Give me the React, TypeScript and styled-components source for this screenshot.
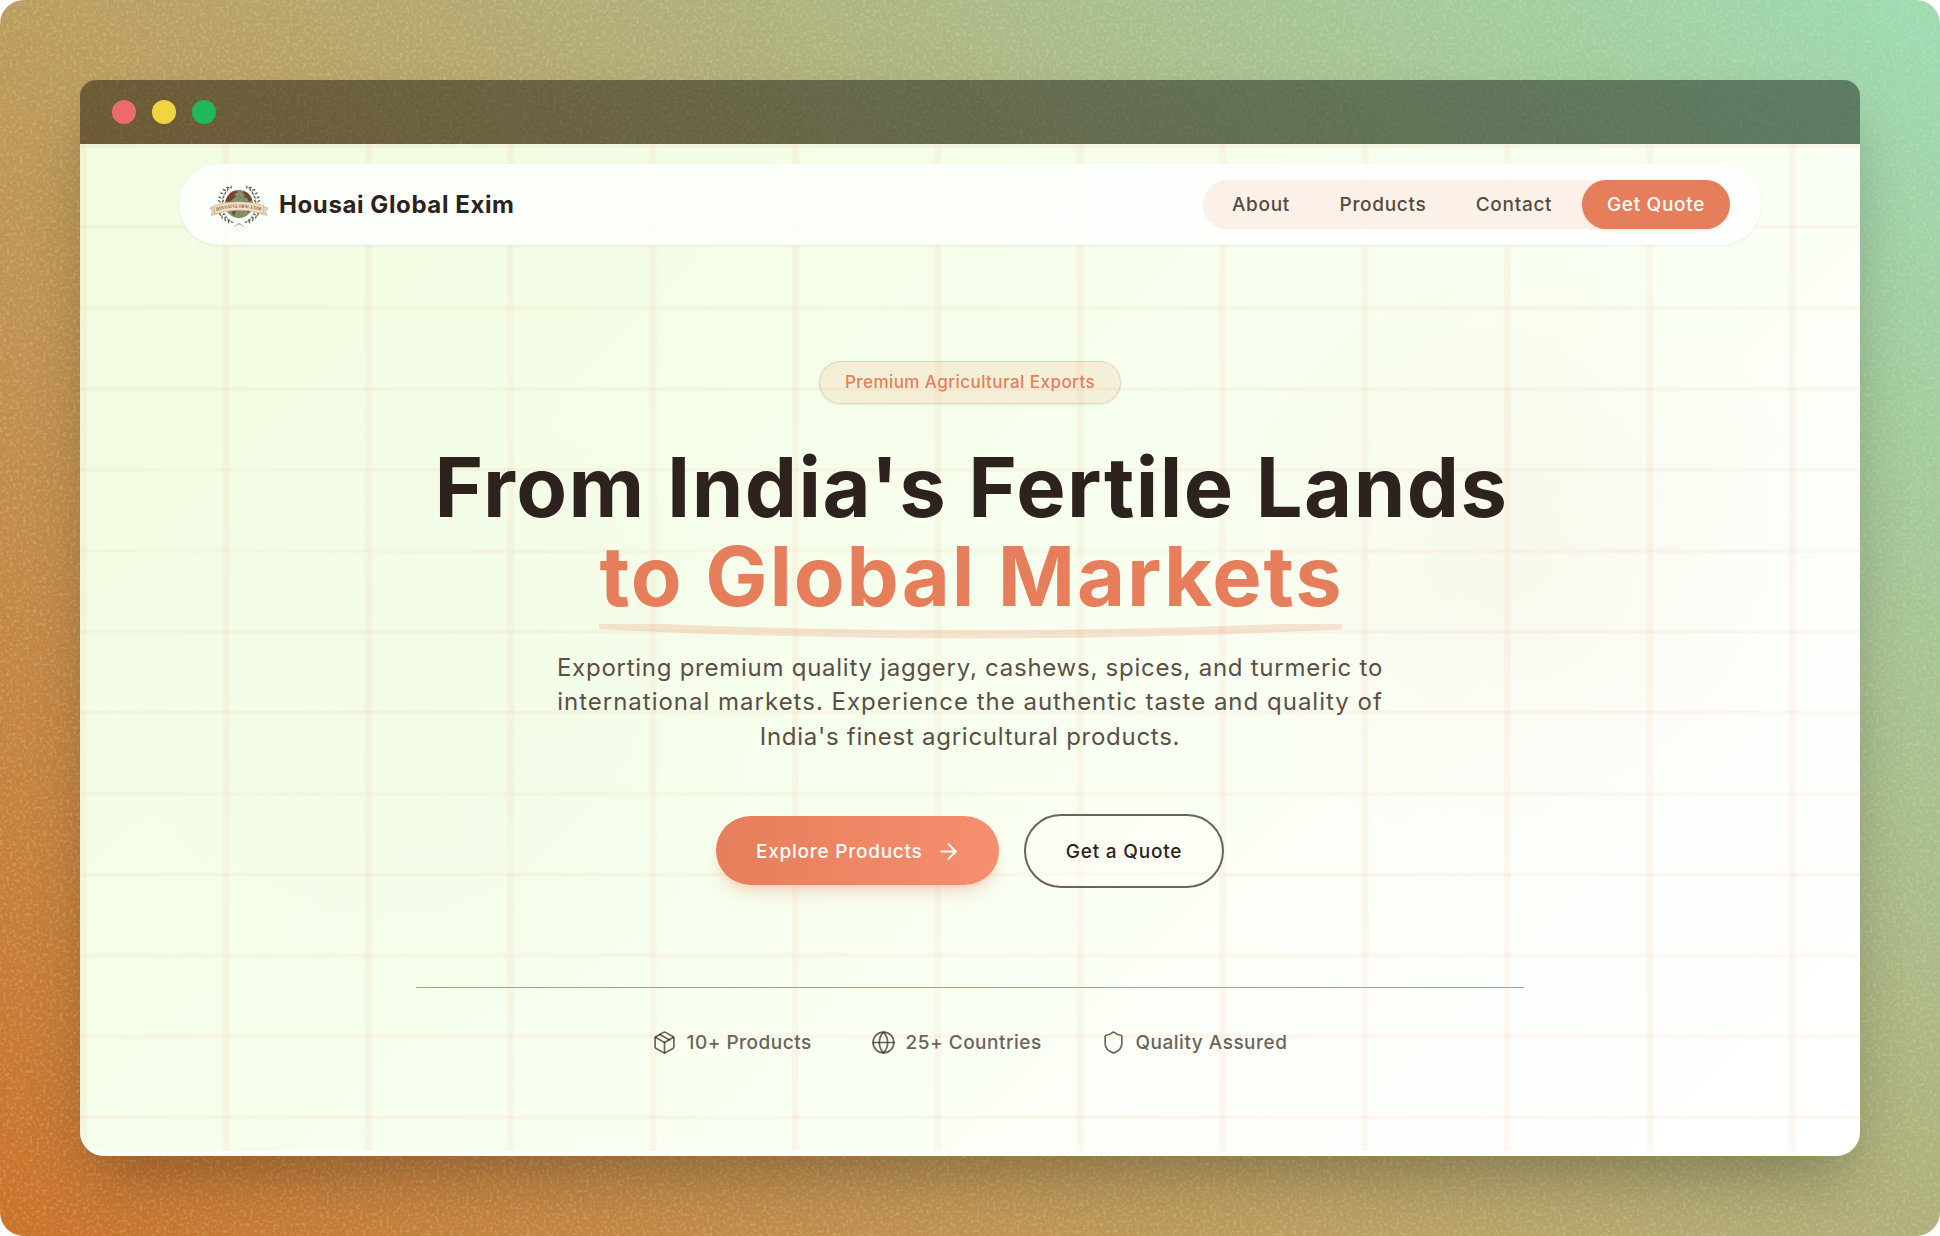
import React from "react";
import styled, { createGlobalStyle } from "styled-components";

const GlobalStyle = createGlobalStyle`
  *, *::before, *::after { box-sizing: border-box; }
  body { margin: 0; background: #fff; font-family: Inter, "Liberation Sans", sans-serif; }
`;

const ink = "#2d221d";
const accent = "#e67e5b";

const Backdrop = styled.div`
  position: relative;
  width: 1940px;
  height: 1236px;
  padding: 80px;
  border-radius: 24px;
  overflow: hidden;
  background: linear-gradient(45deg, #cb722c 0%, #bc9c5f 39%, #b0b07c 61%, #9ddcb4 100%);
`;

const Grain = styled.svg`
  position: absolute;
  inset: 0;
  width: 100%;
  height: 100%;
`;

const Window = styled.div`
  position: relative;
  height: 1076px;
  display: flex;
  flex-direction: column;
  border-radius: 16px 16px 24px 24px;
  box-shadow: 0 31px 62px -15px rgba(0, 0, 0, 0.3);
`;

const TitleBar = styled.div`
  height: 64px;
  display: flex;
  align-items: center;
  gap: 16px;
  padding-left: 32px;
  border-radius: 16px 16px 0 0;
  background: rgba(0, 0, 0, 0.42);
`;

const Dot = styled.span<{ $color: string }>`
  width: 24px;
  height: 24px;
  border-radius: 50%;
  opacity: 0.95;
  background: ${(p) => p.$color};
`;

const Page = styled.main`
  flex: 1;
  border-radius: 0 0 24px 24px;
  border-bottom: 5px solid #fff;
  background:
    radial-gradient(circle at 1430px 410px, rgba(240, 215, 190, 0.16), transparent 310px),
    radial-gradient(circle at 370px 570px, rgba(225, 240, 215, 0.18), transparent 340px),
    linear-gradient(135deg, #f1fce0 0%, #f7ffee 50%, #fdfffb 78%, #ffffff 100%);
  overflow: hidden;
`;

const Grid = styled.div`
  height: 100%;
  padding: 20px 99px 0;
  display: flex;
  flex-direction: column;
  align-items: center;
  background-image:
    linear-gradient(to right, rgba(240, 165, 125, 0.09) 7px, transparent 7px),
    linear-gradient(to bottom, rgba(240, 165, 125, 0.09) 4px, transparent 4px);
  background-size: 142.4px 80.96px;
`;

const Header = styled.header`
  width: 1582px;
  height: 81px;
  padding: 0 31px 0 30px;
  display: flex;
  align-items: center;
  justify-content: space-between;
  border-radius: 41px;
  background: rgba(255, 255, 255, 0.82);
  box-shadow: 0 1px 3px rgba(0, 0, 0, 0.07);
`;

const Brand = styled.div`
  display: flex;
  align-items: center;
  gap: 10px;
`;

const BrandName = styled.span`
  padding-bottom: 1px;
  font-size: 24px;
  font-weight: 650;
  letter-spacing: 0.6px;
  white-space: nowrap;
  color: ${ink};
`;

const Nav = styled.nav`
  height: 49px;
  padding-left: 4px;
  display: flex;
  border-radius: 25px;
  background: rgba(240, 180, 145, 0.18);
`;

const NavLink = styled.a<{ $width: number }>`
  width: ${(p) => p.$width}px;
  display: grid;
  place-items: center;
  font-size: 19px;
  font-weight: 500;
  letter-spacing: 0.7px;
  color: #554a42;
`;

const NavCta = styled(NavLink)`
  margin-left: 5px;
  border-radius: 25px;
  color: #fff;
  background: ${accent};
  box-shadow: 0 1px 3px rgba(0, 0, 0, 0.1);
`;

const Badge = styled.div`
  width: 302px;
  height: 43px;
  margin-top: 116px;
  padding-bottom: 1px;
  display: grid;
  place-items: center;
  border: 1.5px solid rgba(230, 126, 91, 0.28);
  border-radius: 22px;
  background: rgba(236, 170, 130, 0.18);
  box-shadow: 0 1px 3px rgba(0, 0, 0, 0.07);
  font-size: 17px;
  font-weight: 500;
  letter-spacing: 0.45px;
  color: ${accent};
`;

const Title = styled.h1`
  margin: 39px 0 0;
  display: flex;
  flex-direction: column;
  align-items: center;
  font-size: 83px;
  line-height: 89.3px;
  font-weight: 680;
  color: ${ink};
  white-space: nowrap;
`;

const TitleLine = styled.span<{ $spacing: number; $accent?: boolean }>`
  padding-left: 3px;
  letter-spacing: ${(p) => p.$spacing}px;
  color: ${(p) => (p.$accent ? accent : ink)};
`;

const Swash = styled.svg`
  width: 743px;
  height: 15px;
  margin-top: 2px;
`;

const Lead = styled.p`
  margin: 12px 0 0;
  text-align: center;
  font-size: 24px;
  line-height: 34.6px;
  white-space: nowrap;
  color: #5a4f46;
`;

const LeadLine = styled.span<{ $spacing: number }>`
  display: block;
  letter-spacing: ${(p) => p.$spacing}px;
`;

const Actions = styled.div`
  margin-top: 60px;
  display: flex;
  align-items: center;
  gap: 25px;
`;

const Primary = styled.button`
  width: 283px;
  height: 69px;
  margin-bottom: 1px;
  padding: 1px 38px 0 40px;
  display: flex;
  align-items: center;
  justify-content: space-between;
  border: 0;
  border-radius: 35px;
  color: #fff;
  background: linear-gradient(90deg, #e67e5b, #f68f6e);
  box-shadow: 0 12px 18px -4px rgba(230, 126, 91, 0.22), 0 5px 8px -3px rgba(230, 126, 91, 0.2);
  font: 500 19px Inter, sans-serif;
  letter-spacing: 0.75px;
  white-space: nowrap;
`;

const Outline = styled.button`
  width: 200px;
  height: 74px;
  border: 2.5px solid #6b625a;
  border-radius: 37px;
  background: rgba(255, 253, 245, 0.5);
  color: ${ink};
  font: 500 19px Inter, sans-serif;
  letter-spacing: 0.8px;
`;

const Stats = styled.div`
  width: 1108px;
  margin-top: 99px;
  padding-top: 42px;
  display: flex;
  justify-content: center;
  gap: 59px;
  border-top: 1px solid #9ca3af;
`;

const Stat = styled.div<{ $width: number }>`
  width: ${(p) => p.$width}px;
  height: 25px;
  display: flex;
  align-items: center;
  gap: 10px;
  font-size: 19px;
  line-height: 23px;
  font-weight: 500;
  letter-spacing: 0.5px;
  white-space: nowrap;
  color: #6c635b;
`;

const LineIcon = styled.svg<{ $light?: boolean }>`
  width: 25px;
  height: 25px;
  flex: none;
  fill: none;
  stroke: ${(p) => (p.$light ? "#fff" : "rgba(45, 34, 29, 0.7)")};
  stroke-width: ${(p) => (p.$light ? 1.8 : 1.6)};
  stroke-linecap: round;
  stroke-linejoin: round;
`;

// x, y and tilt of each leaf pair on the right-hand laurel branch
const leaves = [
  [9, -17.5, 40], [12.5, -15, 30], [15, -11.5, 20], [17, -7.5, 10], [17.5, -3.5, 0],
  [17, 9.5, -25], [15, 12.5, -35], [12, 15, -45], [8.5, 17, -60],
];

function Logo() {
  return (
    <svg width="60" height="44" viewBox="-30 -22 60 44">
      {[1, -1].map((side) => (
        <g key={side} transform={`scale(${side} 1)`} fill="#5a6653">
          <path d="M8 -18 Q17 -11 17 -1 Q17 11 6 18" fill="none" stroke="#7b8474" strokeWidth="0.5" />
          {leaves.map(([x, y, r], i) => (
            <g key={i}>
              <ellipse cx={x + 1.8} cy={y - 0.4} rx="0.75" ry="1.8" transform={`rotate(${r + 50} ${x + 1.8} ${y})`} />
              <ellipse cx={x - 1.2} cy={y - 0.4} rx="0.7" ry="1.6" transform={`rotate(${r - 40} ${x - 1.2} ${y})`} />
            </g>
          ))}
          <path d="M5 21.5 Q2.5 19 -1.5 18.6" fill="none" stroke="#7b8474" strokeWidth="0.6" />
        </g>
      ))}
      <circle cy="-1" r="14" fill="#81966b" />
      <path d="M-12.6 -6 Q-10 -13 -3 -14.4 L-1 -13 L-4 -11 L-3 -8 L-6 -6 L-8 -4 L-13.6 -3 Z M3 -13.5 L6 -13.4 Q11 -11 13.2 -5 L10 -3 L8 -7 L5 -8 L6 -10 Z M-6 3 L-2.5 4 L-3.5 8 L-5 11 L-7 8 Z M9 3 L12 3 L10 7 L8 7 Z" fill="#7c3c31" />
      <g fill="none" stroke="#5d7250" strokeWidth="0.5" opacity="0.7">
        <ellipse cy="-1" rx="6" ry="14" />
        <path d="M0 -15 V13 M-12 -8 H12 M-12 7 H12" />
      </g>
      <path d="M-23 1 L-29 3 L-26.5 6.5 L-28 10.5 L-21 8.5 Z M23 1 L29 3 L26.5 6.5 L28 10.5 L21 8.5 Z" fill="#e8d2b2" stroke="#b79a78" strokeWidth="0.5" />
      <path d="M-25 0.5 Q0 -7 25 0.5 L24 8.8 Q0 1.8 -24 8.8 Z" fill="#f3dfc3" stroke="#b79a78" strokeWidth="0.5" />
      <path id="ribbon-text" d="M-22.5 6 Q0 -0.8 22.5 6" fill="none" />
      <text fontFamily="Liberation Serif, serif" fontWeight="700" fontSize="5" fill="#7b5a4a">
        <textPath href="#ribbon-text" textLength="45" lengthAdjust="spacingAndGlyphs">HOUSAI GLOBAL EXIM</textPath>
      </text>
    </svg>
  );
}

export default function App() {
  return (
    <>
      <GlobalStyle />
      <Backdrop>
        <Grain>
          <filter id="grain" x="0" y="0" width="100%" height="100%">
            <feTurbulence type="fractalNoise" baseFrequency="0.3" numOctaves="3" seed="4" />
            <feColorMatrix values="0 0 0 0 0.85  0 0 0 0 0.92  0 0 0 0 0.5  4 0 0 0 -1.95" />
          </filter>
          <rect width="100%" height="100%" filter="url(#grain)" opacity="0.19" />
        </Grain>
        <Window>
          <TitleBar>
            <Dot $color="#f36c6e" />
            <Dot $color="#f7da40" />
            <Dot $color="#1dbe5a" />
          </TitleBar>
          <Page>
            <Grid>
              <Header>
                <Brand>
                  <Logo />
                  <BrandName>Housai Global Exim</BrandName>
                </Brand>
                <Nav>
                  <NavLink $width={108}>About</NavLink>
                  <NavLink $width={136}>Products</NavLink>
                  <NavLink $width={126}>Contact</NavLink>
                  <NavCta $width={148}>Get Quote</NavCta>
                </Nav>
              </Header>
              <Badge>Premium Agricultural Exports</Badge>
              <Title>
                <TitleLine $spacing={1.45}>From India's Fertile Lands</TitleLine>
                <TitleLine $spacing={1.9} $accent>to Global Markets</TitleLine>
              </Title>
              <Swash viewBox="0 0 743 15">
                <path d="M0 1.2 Q371.5 19.6 743 1.2" fill="none" stroke="rgba(230,126,91,0.2)" strokeWidth="8.2" />
              </Swash>
              <Lead>
                <LeadLine $spacing={0.74}>Exporting premium quality jaggery, cashews, spices, and turmeric to</LeadLine>
                <LeadLine $spacing={1.0}>international markets. Experience the authentic taste and quality of</LeadLine>
                <LeadLine $spacing={0.73}>India's finest agricultural products.</LeadLine>
              </Lead>
              <Actions>
                <Primary>
                  Explore Products
                  <LineIcon $light viewBox="0 0 24 24">
                    <path d="M5 12h14" />
                    <path d="m12 5 7 7-7 7" />
                  </LineIcon>
                </Primary>
                <Outline>Get a Quote</Outline>
              </Actions>
              <Stats>
                <Stat $width={160}>
                  <LineIcon viewBox="0 0 24 24">
                    <path d="m7.5 4.27 9 5.15" />
                    <path d="M21 8a2 2 0 0 0-1-1.73l-7-4a2 2 0 0 0-2 0l-7 4A2 2 0 0 0 3 8v8a2 2 0 0 0 1 1.73l7 4a2 2 0 0 0 2 0l7-4A2 2 0 0 0 21 16Z" />
                    <path d="m3.3 7 8.7 5 8.7-5" />
                    <path d="M12 22V12" />
                  </LineIcon>
                  10+ Products
                </Stat>
                <Stat $width={171}>
                  <LineIcon viewBox="0 0 24 24">
                    <circle cx="12" cy="12" r="10" />
                    <path d="M12 2a14.5 14.5 0 0 0 0 20 14.5 14.5 0 0 0 0-20" />
                    <path d="M2 12h20" />
                  </LineIcon>
                  25+ Countries
                </Stat>
                <Stat $width={188}>
                  <LineIcon viewBox="0 0 24 24">
                    <path d="M20 13c0 5-3.5 7.5-7.66 8.95a1 1 0 0 1-.67-.01C7.5 20.5 4 18 4 13V6a1 1 0 0 1 1-1c2 0 4.5-1.2 6.24-2.72a1.17 1.17 0 0 1 1.52 0C14.51 3.81 17 5 19 5a1 1 0 0 1 1 1z" />
                  </LineIcon>
                  Quality Assured
                </Stat>
              </Stats>
            </Grid>
          </Page>
        </Window>
      </Backdrop>
    </>
  );
}
